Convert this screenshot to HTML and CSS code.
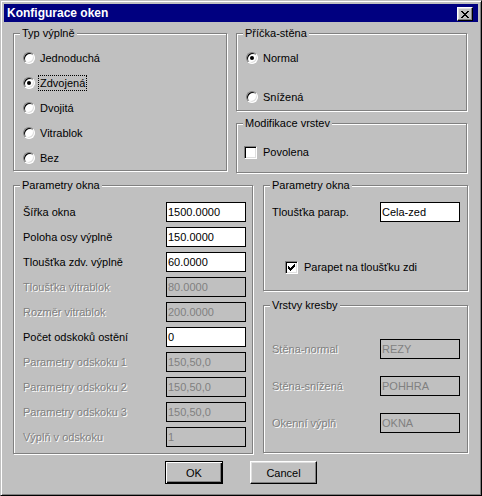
FILE: index.html
```html
<!DOCTYPE html>
<html lang="cs">
<head>
<meta charset="utf-8">
<title>Konfigurace oken</title>
<link rel="stylesheet" href="styles.css">
</head>
<body>
<div class="window">
  <div class="titlebar">
    <span class="title">Konfigurace oken</span>
    <span class="close">
      <svg width="8" height="7" viewBox="0 0 8 7" shape-rendering="crispEdges">
        <rect x="0" y="0" width="2" height="1"/><rect x="6" y="0" width="2" height="1"/>
        <rect x="1" y="1" width="2" height="1"/><rect x="5" y="1" width="2" height="1"/>
        <rect x="2" y="2" width="4" height="1"/>
        <rect x="3" y="3" width="2" height="1"/>
        <rect x="2" y="4" width="4" height="1"/>
        <rect x="1" y="5" width="2" height="1"/><rect x="5" y="5" width="2" height="1"/>
        <rect x="0" y="6" width="2" height="1"/><rect x="6" y="6" width="2" height="1"/>
      </svg>
    </span>
  </div>
  <div class="content">
    <div class="row row-top">
      <div class="group g-typ">
        <div class="gtitle">Typ výplně</div>
        <div class="opts opts-typ">
          <div class="opt"><span class="radio"></span><span>Jednoduchá</span></div>
          <div class="opt"><span class="radio on"></span><span class="focus">Zdvojená</span></div>
          <div class="opt"><span class="radio"></span><span>Dvojitá</span></div>
          <div class="opt"><span class="radio"></span><span>Vitrablok</span></div>
          <div class="opt"><span class="radio"></span><span>Bez</span></div>
        </div>
      </div>
      <div class="col col-top">
        <div class="group g-pricka">
          <div class="gtitle">Příčka-stěna</div>
          <div class="opts opts-pricka">
            <div class="opt"><span class="radio on"></span><span>Normal</span></div>
            <div class="opt"><span class="radio"></span><span>Snížená</span></div>
          </div>
        </div>
        <div class="group g-mod">
          <div class="gtitle">Modifikace vrstev</div>
          <div class="opts opts-mod">
            <div class="opt opt-check"><span class="check"></span><span>Povolena</span></div>
          </div>
        </div>
      </div>
    </div>

    <div class="row row-bottom">
      <div class="group g-param">
        <div class="gtitle">Parametry okna</div>
        <div class="fields fields-left">
          <div class="field"><span class="lbl">Šířka okna</span><span class="edit">1500.0000</span></div>
          <div class="field"><span class="lbl">Poloha osy výplně</span><span class="edit">150.0000</span></div>
          <div class="field"><span class="lbl">Tloušťka zdv. výplně</span><span class="edit">60.0000</span></div>
          <div class="field"><span class="lbl dis">Tloušťka vitrablok</span><span class="edit dis">80.0000</span></div>
          <div class="field"><span class="lbl dis">Rozměr vitrablok</span><span class="edit dis">200.0000</span></div>
          <div class="field"><span class="lbl">Počet odskoků ostění</span><span class="edit">0</span></div>
          <div class="field"><span class="lbl dis">Parametry odskoku 1</span><span class="edit dis">150,50,0</span></div>
          <div class="field"><span class="lbl dis">Parametry odskoku 2</span><span class="edit dis">150,50,0</span></div>
          <div class="field"><span class="lbl dis">Parametry odskoku 3</span><span class="edit dis">150,50,0</span></div>
          <div class="field"><span class="lbl dis">Výplň v odskoku</span><span class="edit dis">1</span></div>
        </div>
      </div>
      <div class="col col-bottom">
        <div class="group g-par2">
          <div class="gtitle">Parametry okna</div>
          <div class="fields fields-par2">
            <div class="field"><span class="lbl">Tloušťka parap.</span><span class="edit">Cela-zed</span></div>
            <div class="opt opt-check opt-parapet">
              <span class="check">
                <svg width="7" height="7" viewBox="0 0 7 7" shape-rendering="crispEdges">
                  <rect x="6" y="0" width="1" height="1"/>
                  <rect x="5" y="1" width="2" height="1"/>
                  <rect x="0" y="2" width="1" height="1"/><rect x="4" y="2" width="3" height="1"/>
                  <rect x="0" y="3" width="2" height="1"/><rect x="3" y="3" width="3" height="1"/>
                  <rect x="0" y="4" width="5" height="1"/>
                  <rect x="1" y="5" width="3" height="1"/>
                  <rect x="2" y="6" width="1" height="1"/>
                </svg>
              </span>
              <span>Parapet na tloušťku zdi</span>
            </div>
          </div>
        </div>
        <div class="group g-vrs">
          <div class="gtitle">Vrstvy kresby</div>
          <div class="fields fields-vrs">
            <div class="field"><span class="lbl dis">Stěna-normal</span><span class="edit dis">REZY</span></div>
            <div class="field"><span class="lbl dis">Stěna-snížená</span><span class="edit dis">POHHRA</span></div>
            <div class="field"><span class="lbl dis">Okenní výplň</span><span class="edit dis">OKNA</span></div>
          </div>
        </div>
      </div>
    </div>

    <div class="buttons">
      <button class="btn btn-default" type="button">OK</button>
      <button class="btn btn-cancel" type="button">Cancel</button>
    </div>
  </div>
</div>
</body>
</html>
```

FILE: styles.css
```css
html, body {
  margin: 0;
  padding: 0;
  background: #c0c0c0;
}

body {
  font-family: "Liberation Sans", Arial, sans-serif;
  font-size: 11px;
  color: #000;
}

.window {
  width: 482px;
  height: 496px;
  box-sizing: border-box;
  background: #c0c0c0;
  border: 1px solid;
  border-color: #c0c0c0 #000 #000 #c0c0c0;
  box-shadow: inset 1px 1px #fff, inset -1px -1px #808080;
  padding: 3px;
  display: flex;
  flex-direction: column;
}

.titlebar {
  height: 18px;
  background: #000080;
  color: #fff;
  display: flex;
  align-items: center;
  justify-content: space-between;
  padding: 0 5px 0 3px;
  flex: none;
}

.title {
  font-weight: bold;
  font-size: 12px;
  line-height: 18px;
}

.close {
  width: 16px;
  height: 14px;
  box-sizing: border-box;
  background: #c0c0c0;
  border: 1px solid;
  border-color: #fff #000 #000 #fff;
  box-shadow: inset -1px -1px #808080, inset 1px 1px #dfdfdf;
  display: flex;
  align-items: center;
  justify-content: center;
  margin-top: 2px;
}

.close svg, .check svg {
  display: block;
  fill: #000;
}

.content {
  padding: 11px 9px 0 9px;
  display: flex;
  flex-direction: column;
}

.row {
  display: flex;
  align-items: flex-start;
}

.row-top {
  gap: 9px;
}

.row-bottom {
  gap: 10px;
  margin-top: 12px;
}

.col {
  display: flex;
  flex-direction: column;
}

.col-top {
  width: 231px;
  gap: 12px;
}

.col-bottom {
  width: 205px;
  gap: 14px;
}

.group {
  box-sizing: border-box;
  border: 1px solid #808080;
  box-shadow: inset 1px 1px #fff, 1px 1px #fff;
  display: flex;
  flex-direction: column;
  align-items: stretch;
}

.gtitle {
  align-self: flex-start;
  margin: -7px 0 0 6px;
  padding: 0 2px;
  height: 13px;
  line-height: 13px;
  background: #c0c0c0;
}

.g-typ { width: 214px; height: 138px; }
.g-pricka { height: 78px; }
.g-mod { height: 50px; }
.g-param { width: 240px; height: 269px; }
.g-par2 { height: 106px; }
.g-vrs { height: 148px; }

.opts {
  display: flex;
  flex-direction: column;
  padding-left: 9px;
}

.opts-typ { margin-top: 8px; gap: 5px; }
.opts-pricka { margin-top: 8px; gap: 19px; }
.opts-mod { margin-top: 12px; padding-left: 7px; }

.opt {
  height: 20px;
  display: flex;
  align-items: center;
  gap: 5px;
}

.opt-check {
  gap: 6px;
}

.radio {
  width: 12px;
  height: 12px;
  box-sizing: border-box;
  border-radius: 50%;
  border: 1px solid;
  border-color: #808080 #fff #fff #808080;
  box-shadow: inset 1px 1px #000, inset -1px -1px #dfdfdf;
  background: #fff;
  display: flex;
  align-items: center;
  justify-content: center;
  flex: none;
}

.radio.on::after {
  content: "";
  width: 4px;
  height: 4px;
  border-radius: 50%;
  background: #000;
}

.check {
  width: 13px;
  height: 13px;
  box-sizing: border-box;
  border: 1px solid;
  border-color: #808080 #fff #fff #808080;
  box-shadow: inset 1px 1px #000, inset -1px -1px #dfdfdf;
  background: #fff;
  display: flex;
  align-items: center;
  justify-content: center;
  flex: none;
}

.focus {
  outline: 1px dotted #000;
  outline-offset: 1px;
}

.fields {
  display: flex;
  flex-direction: column;
}

.fields-left {
  margin-top: 10px;
  padding: 0 6px 0 9px;
  gap: 5px;
}

.fields-par2 {
  margin-top: 10px;
  padding: 0 7px 0 8px;
}

.fields-vrs {
  margin-top: 27px;
  padding: 0 7px 0 8px;
  gap: 17px;
}

.field {
  height: 20px;
  display: flex;
  align-items: center;
  justify-content: space-between;
}

.lbl.dis {
  color: #808080;
  text-shadow: 1px 1px 0 #fff;
}

.edit {
  width: 80px;
  height: 20px;
  box-sizing: border-box;
  border: 1px solid #000;
  background: #fff;
  padding-left: 1px;
  line-height: 18px;
  white-space: nowrap;
  overflow: hidden;
}

.edit.dis {
  background: #c0c0c0;
  color: #808080;
}

.opt-parapet {
  margin-top: 35px;
  margin-left: 13px;
}

.buttons {
  display: flex;
  justify-content: center;
  gap: 27px;
  margin-top: 7px;
}

.btn {
  height: 23px;
  box-sizing: border-box;
  font-family: "Liberation Sans", Arial, sans-serif;
  font-size: 11px;
  color: #000;
  background: #c0c0c0;
  border: 1px solid;
  border-color: #fff #000 #000 #fff;
  box-shadow: inset -1px -1px #808080, inset 1px 1px #dfdfdf;
  padding: 0;
  margin: 0;
  border-radius: 0;
}

.btn-default {
  width: 58px;
  border-color: #000;
  box-shadow: inset 1px 1px #fff, inset -1px -1px #000, inset -2px -2px #808080;
}

.btn-cancel {
  width: 67px;
}
```
